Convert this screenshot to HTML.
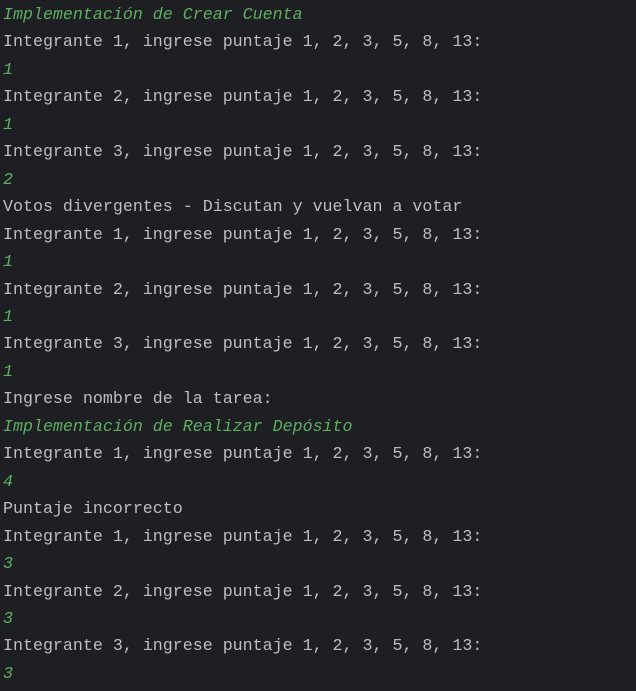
<!DOCTYPE html><html><head><meta charset="utf-8"><style>
body{margin:0;background:#1e1f22;width:636px;height:691px;overflow:hidden}
pre{margin:0;padding:0 0 0 3px;font-family:"Liberation Mono",monospace;font-size:16.65px;line-height:27.46px;color:#bcbec4;position:relative;top:1px}
i{color:#5fae63;font-style:italic}
</style></head><body><pre><i>Implementación de Crear Cuenta</i>
Integrante 1, ingrese puntaje 1, 2, 3, 5, 8, 13:
<i>1</i>
Integrante 2, ingrese puntaje 1, 2, 3, 5, 8, 13:
<i>1</i>
Integrante 3, ingrese puntaje 1, 2, 3, 5, 8, 13:
<i>2</i>
Votos divergentes - Discutan y vuelvan a votar
Integrante 1, ingrese puntaje 1, 2, 3, 5, 8, 13:
<i>1</i>
Integrante 2, ingrese puntaje 1, 2, 3, 5, 8, 13:
<i>1</i>
Integrante 3, ingrese puntaje 1, 2, 3, 5, 8, 13:
<i>1</i>
Ingrese nombre de la tarea:
<i>Implementación de Realizar Depósito</i>
Integrante 1, ingrese puntaje 1, 2, 3, 5, 8, 13:
<i>4</i>
Puntaje incorrecto
Integrante 1, ingrese puntaje 1, 2, 3, 5, 8, 13:
<i>3</i>
Integrante 2, ingrese puntaje 1, 2, 3, 5, 8, 13:
<i>3</i>
Integrante 3, ingrese puntaje 1, 2, 3, 5, 8, 13:
<i>3</i></pre></body></html>
